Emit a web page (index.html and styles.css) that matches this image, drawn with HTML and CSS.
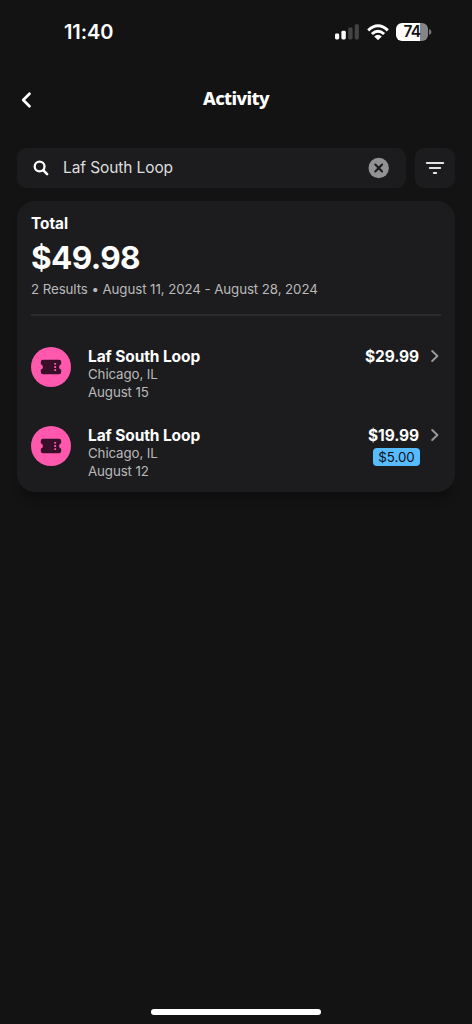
FILE: index.html
```
<!DOCTYPE html>
<html lang="en">
<head>
<meta charset="utf-8">
<title>Activity</title>
<link rel="stylesheet" href="styles.css">
</head>
<body>
<div class="screen">
  <div class="status">
    <span class="time">11:40</span>
    <div class="status-icons">
      <svg class="signal" width="25" height="16" viewBox="0 0 25 16"><rect x="0" y="9.5" width="4.2" height="6" rx="1.4" fill="#fff"/><rect x="6.4" y="6.8" width="4.4" height="8.7" rx="1.4" fill="#fff"/><rect x="13.2" y="3.5" width="4.4" height="12" rx="1.4" fill="#434343"/><rect x="19.7" y="0.3" width="4.2" height="15.2" rx="1.4" fill="#434343"/></svg>
      <svg class="wifi" width="22" height="17" viewBox="0 0 22 17" fill="none" stroke="#fff" stroke-width="3"><path d="M1.2 6.3Q11-2.7 20.8 6.3"/><path d="M4.9 10Q11 4.5 17.1 10"/><path d="M11 15.8 7.6 12.5Q11 9.7 14.4 12.5Z" fill="#fff" stroke="#fff" stroke-width=".7"/></svg>
      <div class="battery"><span class="level">74</span></div>
      <svg class="battery-cap" width="3" height="6" viewBox="0 0 3 6"><path d="M0 0Q2.5.8 2.5 3T0 6Z" fill="#777"/></svg>
    </div>
  </div>
  <header class="header">
    <svg class="back" width="12" height="18" viewBox="0 0 12 18" fill="none" stroke="#fff" stroke-width="2.7" stroke-linecap="round" stroke-linejoin="round"><path d="M9.5 2.7 3.2 9l6.3 6.3"/></svg>
    <h1 class="title">Activity</h1>
  </header>
  <div class="search-row">
    <div class="search">
      <svg class="magnifier" width="16" height="16" viewBox="0 0 16 16" fill="none" stroke="#fff" stroke-linecap="round"><circle cx="6.6" cy="6.5" r="4.9" stroke-width="2.3"/><path d="m10.4 10.4 3.7 3.7" stroke-width="2.6"/></svg>
      <span class="query">Laf South Loop</span>
      <svg class="clear" width="22" height="22" viewBox="0 0 22 22"><circle cx="10.7" cy="11" r="10.2" fill="#929294"/><path d="m7.3 7.6 6.8 6.8m0-6.8-6.8 6.8" stroke="#1c1c1e" stroke-width="2.1" stroke-linecap="round"/></svg>
    </div>
    <div class="filter">
      <svg width="20" height="14" viewBox="0 0 20 14" stroke="#e2e2e2" stroke-width="2" stroke-linecap="round"><path d="M1.8 2h16.4M4.8 7h10.4M8.8 12h2.4"/></svg>
    </div>
  </div>
  <main class="card">
    <div class="label">Total</div>
    <div class="total">$49.98</div>
    <div class="summary">2 Results • August 11, 2024 - August 28, 2024</div>
    <div class="divider"></div>
    <div class="item">
      <div class="avatar"><svg width="22" height="16" viewBox="0 0 22 16"><path d="M3 .8h16q2.2 0 2.2 2.2v2.2a2.9 2.9 0 0 0 0 5.6V13q0 2.2-2.2 2.2H3Q.8 15.2.8 13v-2.2a2.9 2.9 0 0 0 0-5.6V3Q.8.8 3 .8Z" fill="#380f28"/><path d="M14.3 4h1.8v1.8h-1.8zm0 3.1h1.8v1.8h-1.8zm0 3.1h1.8v1.8h-1.8z" fill="#ff58ad"/></svg></div>
      <div class="details"><div class="name">Laf South Loop</div><div class="meta">Chicago, IL</div><div class="meta">August 15</div></div>
      <div class="amounts"><div class="price">$29.99</div></div>
      <svg class="chevron" width="9" height="14" viewBox="0 0 9 14" fill="none" stroke="#98989a" stroke-width="2" stroke-linecap="round" stroke-linejoin="round"><path d="m2.2 2 5.2 5-5.2 5"/></svg>
    </div>
    <div class="item">
      <div class="avatar"><svg width="22" height="16" viewBox="0 0 22 16"><path d="M3 .8h16q2.2 0 2.2 2.2v2.2a2.9 2.9 0 0 0 0 5.6V13q0 2.2-2.2 2.2H3Q.8 15.2.8 13v-2.2a2.9 2.9 0 0 0 0-5.6V3Q.8.8 3 .8Z" fill="#380f28"/><path d="M14.3 4h1.8v1.8h-1.8zm0 3.1h1.8v1.8h-1.8zm0 3.1h1.8v1.8h-1.8z" fill="#ff58ad"/></svg></div>
      <div class="details"><div class="name">Laf South Loop</div><div class="meta">Chicago, IL</div><div class="meta">August 12</div></div>
      <div class="amounts"><div class="price">$19.99</div><div class="badge">$5.00</div></div>
      <svg class="chevron" width="9" height="14" viewBox="0 0 9 14" fill="none" stroke="#98989a" stroke-width="2" stroke-linecap="round" stroke-linejoin="round"><path d="m2.2 2 5.2 5-5.2 5"/></svg>
    </div>
  </main>
  <div class="home-indicator"></div>
</div>
</body>
</html>
```
FILE: styles.css
```
* { box-sizing: border-box; }
body { margin: 0; background: #131313; color: #fff; font-family: Inter, "Liberation Sans", sans-serif; }
.screen { width: 472px; height: 1024px; display: flex; flex-direction: column; overflow: hidden; }
svg { display: block; flex-shrink: 0; }

.status { height: 64px; padding: 0 40px 0 64px; display: flex; justify-content: space-between; align-items: center; }
.time { font-size: 20px; line-height: 24px; font-weight: 600; letter-spacing: -.1px; }
.status-icons { display: flex; align-items: center; }
.wifi { margin-left: 7px; margin-right: 7px; }
.battery { width: 32px; height: 18px; border-radius: 6px; background: linear-gradient(to right, #fff 74%, #858585 74%); }
.level { display: block; text-align: center; color: #131313; font-size: 15.5px; line-height: 18px; font-weight: 600; letter-spacing: -.7px; }
.battery-cap { margin-left: 1px; }

.header { height: 72px; display: grid; grid-template-columns: 40px 1fr 40px; align-items: center; padding-bottom: 3px; }
.back { margin-left: 20px; margin-top: 2px; }
.title { margin: -2px 0 0; text-align: center; font-family: "Noto Sans", sans-serif; font-size: 18px; line-height: 24px; font-weight: 800; letter-spacing: -.6px; }

.search-row { margin: 12px 17px 0 17px; height: 40px; display: flex; gap: 9px; }
.search { flex: 1; border-radius: 9px; background: #1c1c1e; display: flex; align-items: center; padding: 0 16px; }
.query { flex: 1; margin: -1px 0 0 14px; font-size: 15.5px; letter-spacing: -.1px; color: #dedede; }
.filter { width: 40px; border-radius: 9px; background: #1c1c1e; display: grid; place-items: center; }

.card { margin: 13px 17px 0; height: 291px; padding: 13px 14px 12px; border-radius: 18px; background: #1c1c1e; box-shadow: 0 12px 9px -4px #0f0f0f; }
.label { height: 19px; font-size: 15.3px; line-height: 20px; font-weight: 700; }
.total { height: 46px; font-size: 31.5px; line-height: 50px; font-weight: 700; letter-spacing: -.6px; }
.summary { height: 20px; font-size: 13.3px; line-height: 20px; letter-spacing: -.08px; color: #b9b9bb; white-space: nowrap; }
.divider { height: 2px; margin-top: 15px; background: #2b2b2d; }
.item { display: flex; height: 79px; align-items: flex-start; }
.divider + .item { margin-top: 31px; }
.avatar { width: 40px; height: 40px; border-radius: 50%; background: #ff58ad; display: grid; place-items: center; }
.details { flex: 1; margin: 1px 0 0 17px; }
.name { font-size: 15.5px; line-height: 18px; font-weight: 700; letter-spacing: -.1px; }
.meta { font-size: 13.3px; line-height: 17.7px; letter-spacing: -.1px; color: #b9b9bb; }
.amounts { margin-top: 1px; display: flex; flex-direction: column; align-items: flex-end; }
.price { font-size: 15.5px; line-height: 18px; font-weight: 700; letter-spacing: -.1px; }
.badge { width: 47px; height: 18px; margin: 3px -1px 0 0; border-radius: 4px; background: #57bbff; color: #111; text-align: center; font-size: 13.3px; line-height: 18px; }
.chevron { margin: 2px 2px 0 11px; }

.home-indicator { width: 170px; height: 6px; margin: auto auto 9px; border-radius: 3px; background: #fff; }
```
